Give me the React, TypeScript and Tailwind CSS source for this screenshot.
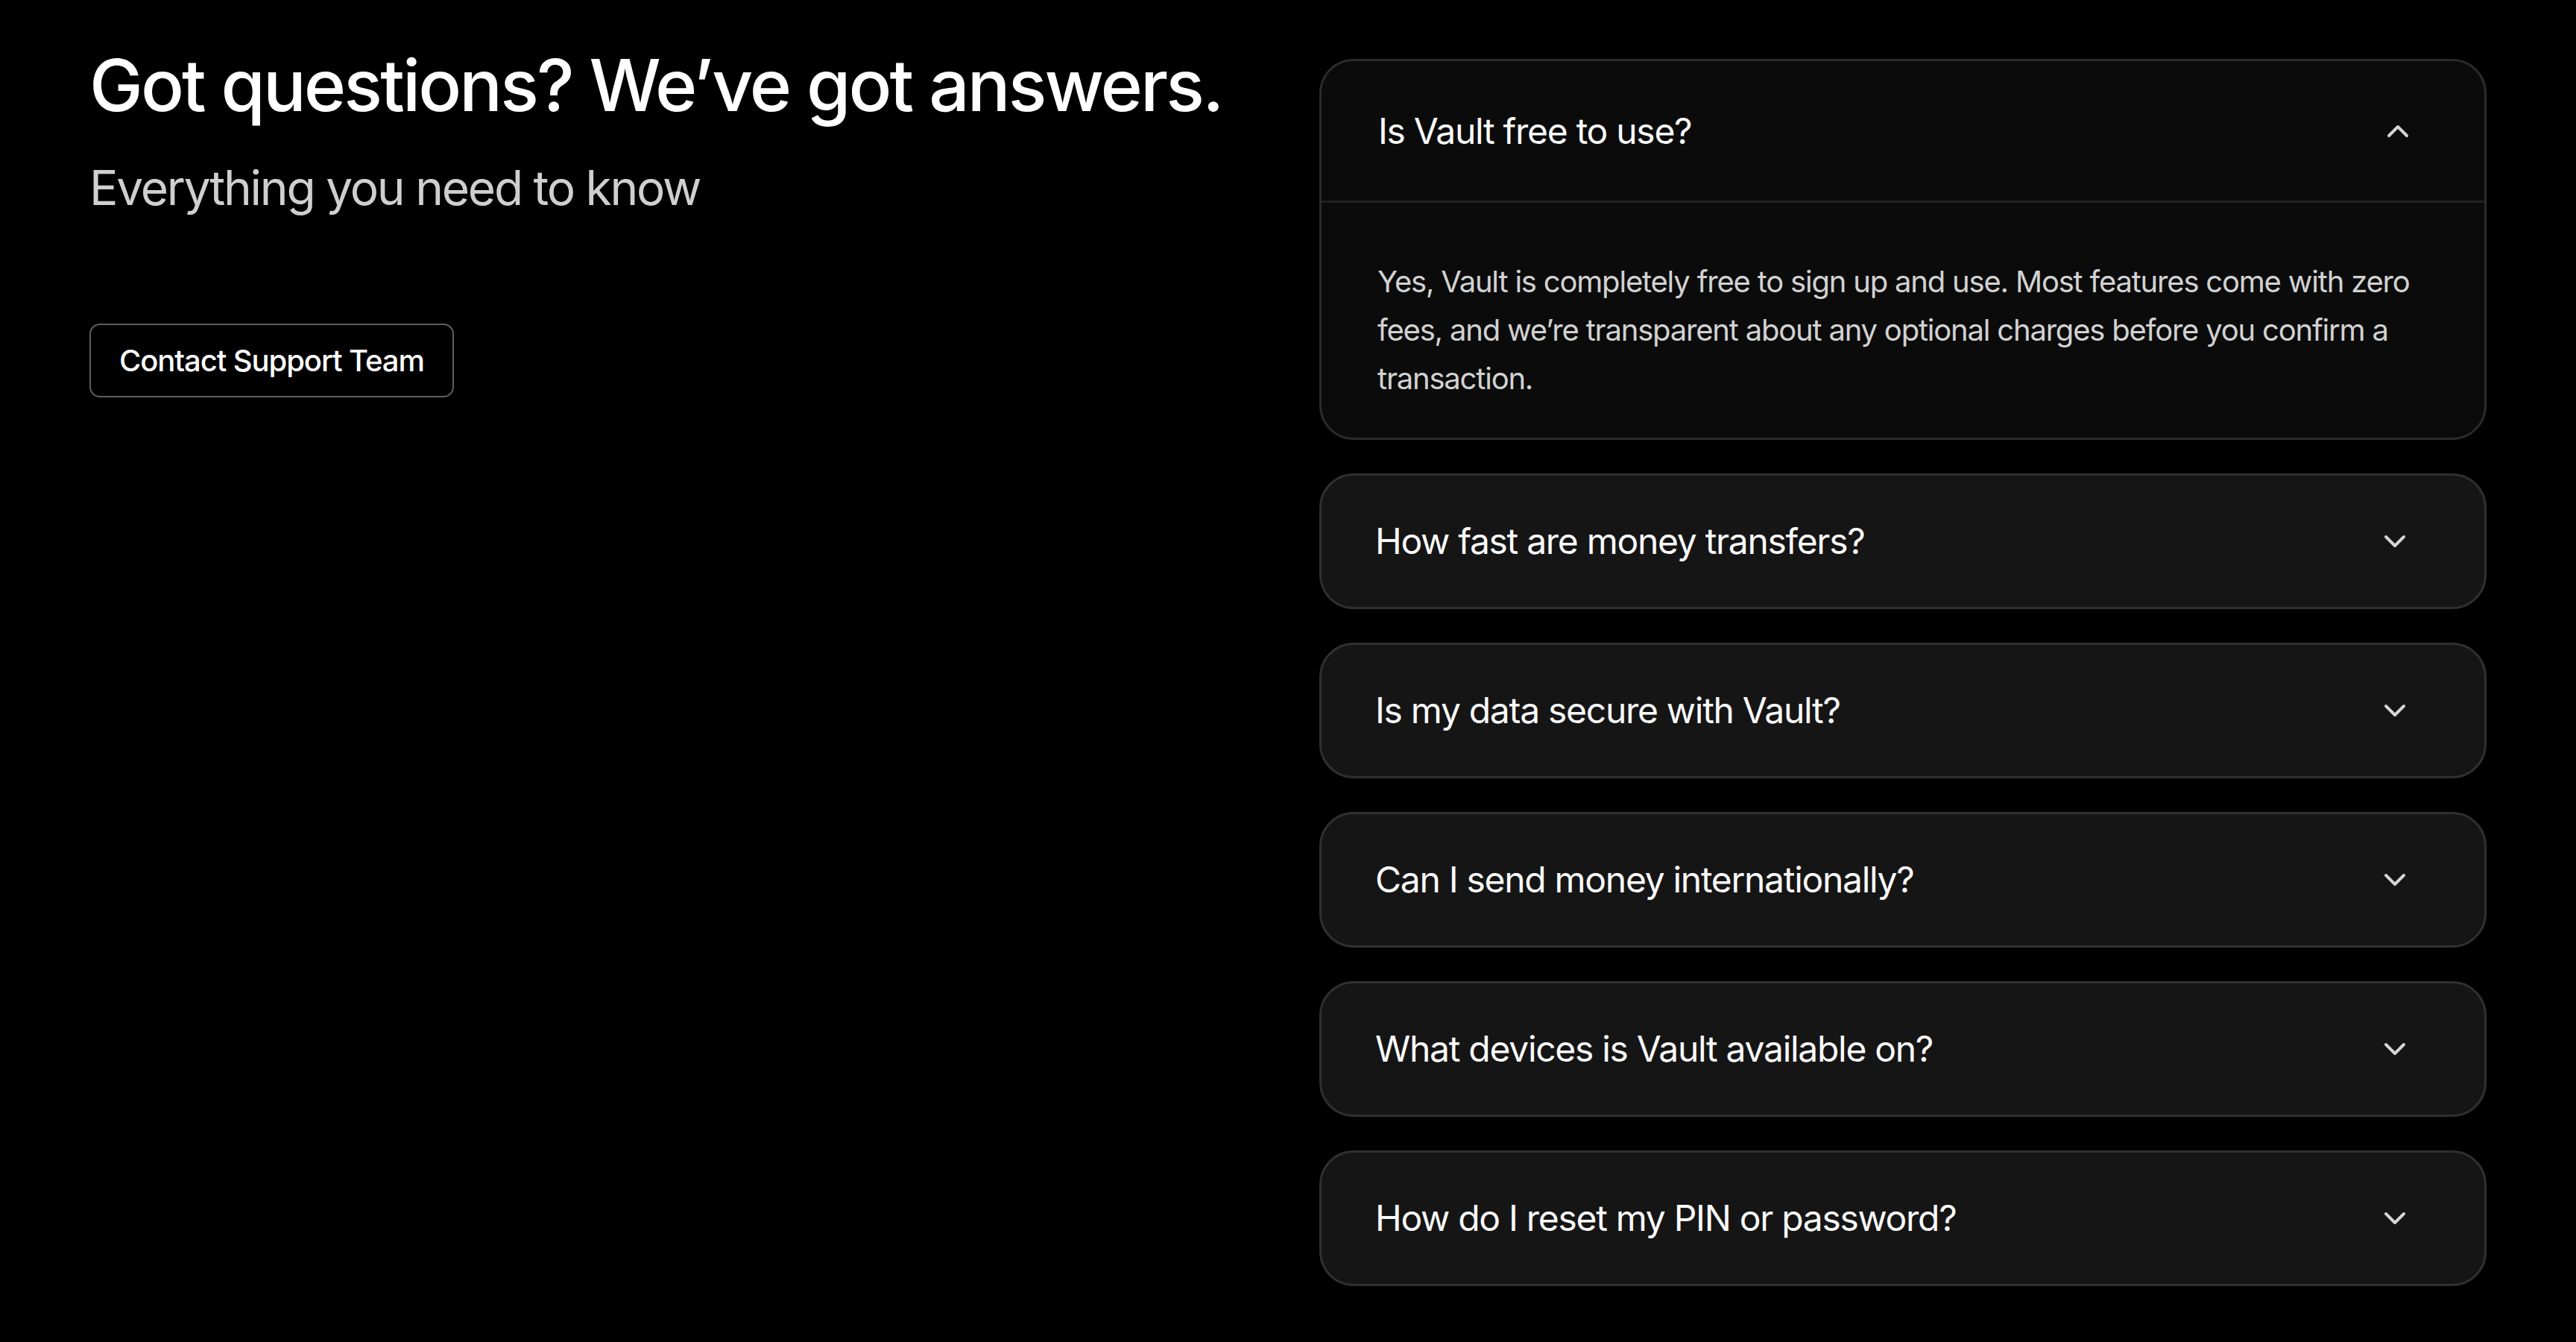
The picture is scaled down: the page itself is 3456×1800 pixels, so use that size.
import React, { useState } from 'react';
import { ChevronDown, ChevronUp } from 'lucide-react';

interface Faq {
  question: string;
  answer: string;
}

const faqs: Faq[] = [
  {
    question: 'Is Vault free to use?',
    answer:
      'Yes, Vault is completely free to sign up and use. Most features come with zero fees, and we’re transparent about any optional charges before you confirm a transaction.',
  },
  {
    question: 'How fast are money transfers?',
    answer:
      'Transfers between Vault accounts are instant. Bank transfers usually arrive within one business day, depending on your bank.',
  },
  {
    question: 'Is my data secure with Vault?',
    answer:
      'Your data is encrypted in transit and at rest, and every account is protected with two-factor authentication.',
  },
  {
    question: 'Can I send money internationally?',
    answer:
      'Yes, you can send money to more than 40 countries with real exchange rates and clear fees shown upfront.',
  },
  {
    question: 'What devices is Vault available on?',
    answer: 'Vault is available on iOS, Android and the web, and your account stays in sync across all of them.',
  },
  {
    question: 'How do I reset my PIN or password?',
    answer: 'Go to Settings, then Security, and follow the steps. We’ll verify it’s you before anything changes.',
  },
];

export default function App() {
  const [open, setOpen] = useState<number | null>(0);

  return (
    <div
      className="min-h-screen w-full bg-black text-white"
      style={{ fontFamily: 'Inter, "Liberation Sans", sans-serif' }}
    >
      <div className="flex justify-between px-[120px] pt-[66px] pb-[60px]">
        {/* left column */}
        <div className="flex flex-col items-start">
          <h1 className="text-[96px] leading-none font-medium tracking-[-0.03em] text-white">
            Got questions? We’ve got answers.
          </h1>
          <p className="mt-[58px] text-[64px] leading-none font-normal tracking-[-0.035em] text-[#cfcfcf]">
            Everything you need to know
          </p>
          <button className="mt-[150px] flex h-[99px] items-center rounded-[14px] border-2 border-[#5e5e5e] px-[38px] text-[40px] font-medium tracking-[-0.027em] text-white">
            Contact Support Team
          </button>
        </div>

        {/* faq list */}
        <div className="flex w-[1566px] shrink-0 flex-col gap-[45px] pt-[13px]">
          {faqs.map((faq, idx) => {
            const isOpen = open === idx;
            return (
              <div
                key={idx}
                className={
                  isOpen
                    ? 'overflow-hidden rounded-[46px] border-[3px] border-[#2b2b2b] bg-[#0b0b0b]'
                    : 'overflow-hidden rounded-[46px] border-[3px] border-[#303030] bg-[#151515]'
                }
              >
                <button
                  onClick={() => setOpen(isOpen ? null : idx)}
                  className={
                    isOpen
                      ? 'flex h-[187px] w-full items-center justify-between pl-[76px] pr-[92px] text-left'
                      : 'flex h-[176px] w-full items-center justify-between pl-[72px] pr-[96px] text-left'
                  }
                >
                  <span className="text-[48px] font-normal leading-tight tracking-[-0.027em] text-[#fafafa]">
                    {faq.question}
                  </span>
                  {isOpen ? (
                    <ChevronUp size={48} strokeWidth={2} className="text-[#d6d6d6]" />
                  ) : (
                    <ChevronDown size={48} strokeWidth={2} className="text-[#d6d6d6]" />
                  )}
                </button>
                {isOpen && (
                  <div className="border-t-[3px] border-[#222222] pt-[73px] pb-[47px] pl-[75px] pr-[80px]">
                    <p className="text-[40px] leading-[65px] tracking-[-0.03em] text-[#d2d2d2]">{faq.answer}</p>
                  </div>
                )}
              </div>
            );
          })}
        </div>
      </div>
    </div>
  );
}
